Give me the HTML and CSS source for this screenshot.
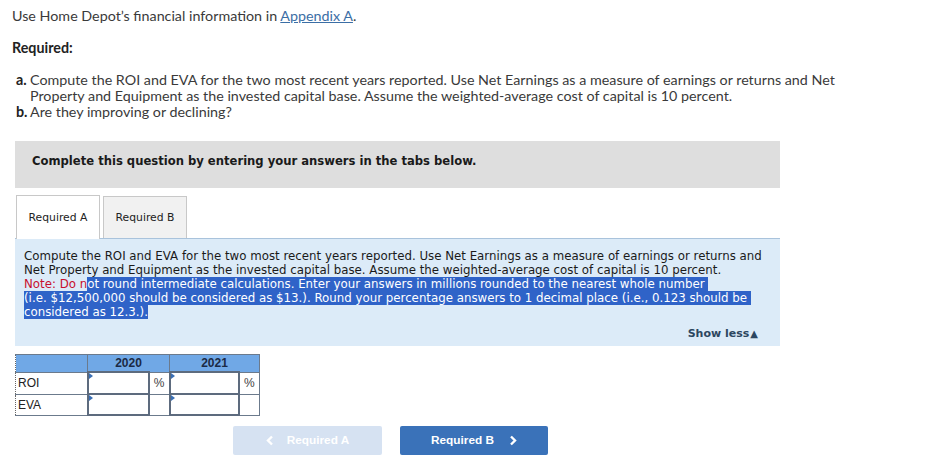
FILE: index.html
```html
<!DOCTYPE html>
<html>
<head>
<meta charset="utf-8">
<link rel="stylesheet" href="styles.css">
</head>
<body>
<div class="page">
  <p class="intro">Use Home Depot’s financial information in <a class="link" href="#">Appendix A</a>.</p>
  <p class="req">Required:</p>
  <div class="items">
    <div class="item"><span class="lbl">a.</span><span class="itxt">Compute the ROI and EVA for the two most recent years reported. Use Net Earnings as a measure of earnings or returns and Net Property and Equipment as the invested capital base. Assume the weighted-average cost of capital is 10 percent.</span></div>
    <div class="item"><span class="lbl">b.</span><span class="itxt">Are they improving or declining?</span></div>
  </div>
  <div class="graybox">Complete this question by entering your answers in the tabs below.</div>
  <div class="tabs">
    <div class="tab active">Required A</div>
    <div class="tab">Required B</div>
  </div>
  <div class="panel">
    <p class="ptext">Compute the ROI and EVA for the two most recent years reported. Use Net Earnings as a measure of earnings or returns and Net Property and Equipment as the invested capital base. Assume the weighted-average cost of capital is 10 percent.<br><span class="note">Note: Do n</span><span class="sel">ot round intermediate calculations. Enter your answers in millions rounded to the nearest whole number&nbsp;<br>(i.e. $12,500,000 should be considered as $13.). Round your percentage answers to 1 decimal place (i.e., 0.123 should be&nbsp;<br>considered as 12.3.).</span></p>
    <div class="showless">Show less<span class="tri-up">&#9650;</span></div>
  </div>
  <table class="grid">
    <colgroup><col class="w0"><col class="w1"><col class="w2"><col class="w3"><col class="w2"></colgroup>
    <tr class="head"><th class="c0"></th><th colspan="2">2020</th><th colspan="2">2021</th></tr>
    <tr class="r1"><td class="c0">ROI</td><td class="inp"><span class="tri"></span></td><td class="pct">%</td><td class="inp"><span class="tri"></span></td><td class="pct">%</td></tr>
    <tr class="r2"><td class="c0">EVA</td><td class="inp"><span class="tri"></span></td><td class="pct"></td><td class="inp"><span class="tri"></span></td><td class="pct"></td></tr>
  </table>
  <div class="navs">
    <div class="btn disabled"><svg class="chev l" width="8" height="11" viewBox="0 0 8 11"><path d="M6 1.5 L2 5.5 L6 9.5" fill="none" stroke="#fff" stroke-width="2.4"/></svg>Required A</div>
    <div class="btn primary">Required B<svg class="chev r" width="8" height="11" viewBox="0 0 8 11"><path d="M2 1.5 L6 5.5 L2 9.5" fill="none" stroke="#fff" stroke-width="2.4"/></svg></div>
  </div>
</div>
</body>
</html>
```
FILE: styles.css
```css
html, body { margin: 0; padding: 0; background: #fff; }
.page { width: 928px; font-family: Lato, "Open Sans", sans-serif; color: #3a3a3a; }
.intro { margin: 8px 0 0 12px; font-size: 14.3px; line-height: 16px; }
.link { color: #3b6ea5; text-decoration: underline; }
.req { margin: 16px 0 0 12px; font-size: 14.3px; line-height: 16px; font-weight: bold; color: #222; }
.items { margin: 16px 0 0 16px; font-size: 14.3px; line-height: 16px; width: 840px; }
.item { display: flex; }
.lbl { font-weight: bold; width: 14px; flex: none; color: #222; }
.itxt { flex: 1; }
.graybox { margin: 21px 0 0 15px; width: 765px; height: 47px; box-sizing: border-box; padding: 12px 0 0 17px; background: #dedede; font-family: "DejaVu Sans Condensed", "DejaVu Sans", sans-serif; font-weight: bold; font-size: 12.9px; line-height: 16px; color: #1a1a1a; }
.tabs { display: flex; margin: 7px 0 0 16px; gap: 3px; align-items: flex-start; height: 43px; }
.tab { box-sizing: border-box; width: 84px; height: 42px; margin-top: 1px; border: 1px solid #c8c8c8; border-bottom: none; background: #f1f1f1; font-family: "DejaVu Sans", sans-serif; font-size: 10.8px; line-height: 41px; text-align: center; color: #222; }
.tab.active { background: #fff; height: 44px; margin-top: 0; line-height: 43px; position: relative; z-index: 1; }
.panel { margin: 0 0 0 15px; width: 765px; box-sizing: border-box; border-top: 1px solid #a9c3dc; background: #dcebf8; padding: 10px 8px 0 9px; height: 108px; font-family: "DejaVu Sans", sans-serif; font-size: 11.8px; line-height: 14px; color: #1a1a1a; }
.ptext { margin: 0; }
.note { color: #c8102e; }
.sel { background: #2f63c8; color: #fff; }
.showless { margin: 8px 14px 0 0; text-align: right; font-weight: bold; font-size: 11px; line-height: 14px; color: #2c4660; }
.tri-up { font-size: 10px; margin-left: 1px; }
.grid { margin: 8px 0 0 15px; border-collapse: collapse; table-layout: fixed; width: 244px; border: 1px dotted #666; font-family: "Liberation Sans", Arial, sans-serif; font-size: 12px; color: #222; }
.w0 { width: 72px; } .w1 { width: 61px; } .w2 { width: 21px; } .w3 { width: 69px; }
.grid th, .grid td { border: 1px solid #6b7a8c; padding: 0; }
.head th { background: #70a8e6; height: 16px; font-weight: bold; font-size: 12px; line-height: 14px; color: #1b2a45; text-align: center; }
.r1 td { height: 20px; }
.r2 td { height: 19px; }
.c0 { padding-left: 2px !important; text-align: left; }
.grid .c0 { border-left: none; }
.inp { position: relative; border: 2px solid #5d6b7e !important; background: #fff; }
.pct { text-align: center; color: #444; }
.tri { position: absolute; left: 0; top: 0; width: 0; height: 0; border-top: 3px solid transparent; border-bottom: 3px solid transparent; border-left: 4px solid #3a6fb5; }
.navs { display: flex; margin: 10px 0 0 233px; gap: 18px; }
.btn { box-sizing: border-box; width: 148px; height: 29px; border-radius: 2px; font-family: "Liberation Sans", Arial, sans-serif; font-weight: bold; font-size: 11.8px; line-height: 29px; text-align: center; color: #fff; display: flex; align-items: center; justify-content: center; }
.btn.disabled { background: #d6e2f2; width: 149px; }
.btn.primary { background: #3a72b9; }
.chev.l { margin-right: 13px; }
.chev.r { margin-left: 15px; }
```
